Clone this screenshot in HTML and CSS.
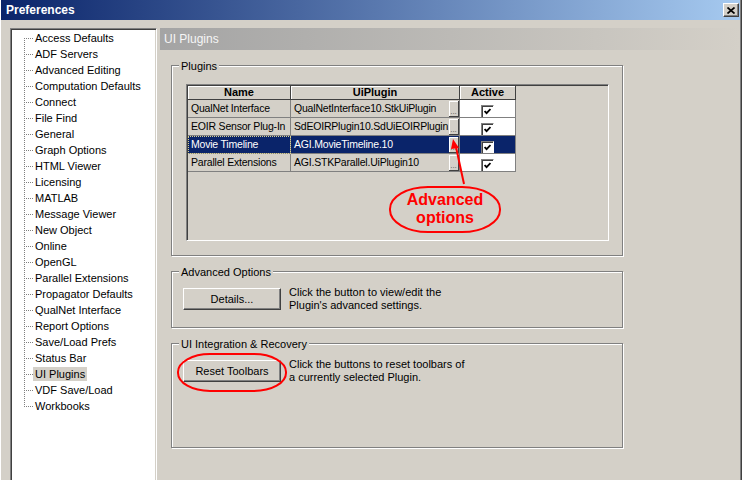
FILE: index.html
```html
<!DOCTYPE html>
<html lang="en">
  <head>
    <meta charset="utf-8">
    <title>Preferences</title>
    <link rel="stylesheet" href="styles.css">
  </head>
  <body>
    <div class="window">
      <div class="titlebar">
        <span class="title">Preferences</span>
        <span class="close"><svg width="8" height="7" viewBox="0 0 8 7"><path d="M0.5 0.5 L7.5 6.5 M7.5 0.5 L0.5 6.5" stroke="#000" stroke-width="1.7"/></svg></span>
      </div>
      <div class="content">
        <ul class="tree">
          <li><span>Access Defaults</span></li>
          <li><span>ADF Servers</span></li>
          <li><span>Advanced Editing</span></li>
          <li><span>Computation Defaults</span></li>
          <li><span>Connect</span></li>
          <li><span>File Find</span></li>
          <li><span>General</span></li>
          <li><span>Graph Options</span></li>
          <li><span>HTML Viewer</span></li>
          <li><span>Licensing</span></li>
          <li><span>MATLAB</span></li>
          <li><span>Message Viewer</span></li>
          <li><span>New Object</span></li>
          <li><span>Online</span></li>
          <li><span>OpenGL</span></li>
          <li><span>Parallel Extensions</span></li>
          <li><span>Propagator Defaults</span></li>
          <li><span>QualNet Interface</span></li>
          <li><span>Report Options</span></li>
          <li><span>Save/Load Prefs</span></li>
          <li><span>Status Bar</span></li>
          <li class="current"><span>UI Plugins</span></li>
          <li><span>VDF Save/Load</span></li>
          <li><span>Workbooks</span></li>
        </ul>
        <div class="main">
          <div class="pane-header">UI Plugins</div>

          <div class="group plugins">
            <div class="legend">Plugins</div>
            <div class="list-frame">
              <div class="grid">
                <div class="hd">Name</div>
                <div class="hd">UiPlugin</div>
                <div class="hd">Active</div>

                <div class="cell">QualNet Interface</div>
                <div class="cell plug"><span>QualNetInterface10.StkUiPlugin</span><span class="dots">...</span></div>
                <div class="cell act"><span class="chk"><svg width="7" height="7" viewBox="0 0 7 7"><path d="M0.6 3 L2.6 5.2 L6.5 1" fill="none" stroke="#000" stroke-width="1.8"/></svg></span></div>

                <div class="cell">EOIR Sensor Plug-In</div>
                <div class="cell plug"><span>SdEOIRPlugin10.SdUiEOIRPlugin</span><span class="dots">...</span></div>
                <div class="cell act"><span class="chk"><svg width="7" height="7" viewBox="0 0 7 7"><path d="M0.6 3 L2.6 5.2 L6.5 1" fill="none" stroke="#000" stroke-width="1.8"/></svg></span></div>

                <div class="cell picked focus">Movie Timeline</div>
                <div class="cell plug picked"><span>AGI.MovieTimeline.10</span><span class="dots">...</span></div>
                <div class="cell act picked"><span class="chk"><svg width="7" height="7" viewBox="0 0 7 7"><path d="M0.6 3 L2.6 5.2 L6.5 1" fill="none" stroke="#000" stroke-width="1.8"/></svg></span></div>

                <div class="cell">Parallel Extensions</div>
                <div class="cell plug"><span>AGI.STKParallel.UiPlugin10</span><span class="dots">...</span></div>
                <div class="cell act"><span class="chk"><svg width="7" height="7" viewBox="0 0 7 7"><path d="M0.6 3 L2.6 5.2 L6.5 1" fill="none" stroke="#000" stroke-width="1.8"/></svg></span></div>
              </div>
            </div>
          </div>

          <div class="group advanced">
            <div class="legend">Advanced Options</div>
            <div class="row">
              <button class="btn">Details...</button>
              <p>Click the button to view/edit the<br>Plugin's advanced settings.</p>
            </div>
          </div>

          <div class="group recovery">
            <div class="legend">UI Integration &amp; Recovery</div>
            <div class="row">
              <button class="btn">Reset Toolbars</button>
              <p>Click the buttons to reset toolbars of<br>a currently selected Plugin.</p>
            </div>
          </div>
        </div>
      </div>

      <!-- red annotations drawn over the dialog -->
      <svg class="marks" width="742" height="480" viewBox="0 0 742 480">
        <rect x="389" y="187" width="110" height="45" rx="38" ry="22" fill="none" stroke="#f00" stroke-width="2"/>
        <rect x="177" y="354" width="108" height="37" rx="32" ry="18" fill="none" stroke="#f00" stroke-width="2"/>
        <line x1="463" y1="184" x2="455" y2="147" stroke="#f00" stroke-width="2"/>
        <polygon points="452,139 458,148 450,149" fill="#f00"/>
      </svg>
      <div class="callout">Advanced<br>options</div>
    </div>
  </body>
</html>
```

FILE: styles.css
```css
body {
  margin: 0;
  background: #d4d0c8;
  font-family: "Liberation Sans", Arial, sans-serif;
  font-size: 11px;
  color: #000;
}
.window {
  position: relative;
  width: 742px;
  height: 480px;
  overflow: hidden;
  box-sizing: border-box;
  border-left: 1px solid #fff;
  border-right: 1px solid #404040;
  box-shadow: inset -1px 0 #808080;
}
.titlebar {
  height: 20px;
  margin-right: 1px;
  display: flex;
  align-items: center;
  justify-content: space-between;
  background: linear-gradient(to right, #0a246a, #a6caf0);
}
.title {
  color: #fff;
  font-weight: bold;
  font-size: 12px;
  padding-left: 5px;
}
.close {
  width: 16px;
  height: 14px;
  box-sizing: border-box;
  margin-right: 1px;
  display: flex;
  align-items: center;
  justify-content: center;
  background: #d4d0c8;
  border: 1px solid;
  border-color: #fff #404040 #404040 #fff;
  box-shadow: inset -1px -1px #808080;
}
.content {
  display: flex;
  gap: 3px;
  height: 460px;
  box-sizing: border-box;
  padding: 8px 1px 0 9px;
}

/* tree */
.tree {
  width: 147px;
  box-sizing: border-box;
  margin: 0 0 -4px 0;
  padding: 1px 0 0 13px;
  list-style: none;
  background: #fff;
  border: 1px solid;
  border-color: #808080 #fff #fff #808080;
  box-shadow: inset 1px 1px #404040, inset -1px -1px #d4d0c8;
}
.tree li {
  display: flex;
  align-items: center;
  height: 16px;
  white-space: nowrap;
}
.tree li::before {
  content: "";
  align-self: stretch;
  width: 9px;
  flex: none;
  background:
    repeating-linear-gradient(to bottom, #808080 0 1px, transparent 1px 2px) 0 0 / 1px 100% no-repeat,
    repeating-linear-gradient(to right, #808080 0 1px, transparent 1px 2px) 0 8px / 9px 1px no-repeat;
}
.tree li:first-child::before {
  background:
    repeating-linear-gradient(to bottom, #808080 0 1px, transparent 1px 2px) 0 8px / 1px 8px no-repeat,
    repeating-linear-gradient(to right, #808080 0 1px, transparent 1px 2px) 0 8px / 9px 1px no-repeat;
}
.tree li:last-child::before {
  background:
    repeating-linear-gradient(to bottom, #808080 0 1px, transparent 1px 2px) 0 0 / 1px 9px no-repeat,
    repeating-linear-gradient(to right, #808080 0 1px, transparent 1px 2px) 0 8px / 9px 1px no-repeat;
}
.tree li span {
  padding: 0 2px;
  line-height: 14px;
}
.tree li.current span {
  background: #d4d0c8;
}

/* right pane */
.main {
  flex: 1;
  display: flex;
  flex-direction: column;
}
.pane-header {
  height: 22px;
  line-height: 22px;
  padding-left: 4px;
  font-size: 12px;
  color: #f6f6f6;
  background: linear-gradient(to right, #a4a4a4, #d4d0c8);
}
.group {
  box-sizing: border-box;
  width: 452px;
  margin: 15px 0 0 11px;
  border: 1px solid #808080;
  box-shadow: 1px 1px #fff, inset 1px 1px #fff;
}
.legend {
  display: table;
  margin: -6px 0 0 7px;
  padding: 0 2px;
  line-height: 13px;
  background: #d4d0c8;
}
.plugins {
  height: 191px;
}
.advanced {
  height: 57px;
}
.recovery {
  height: 105px;
}
.list-frame {
  box-sizing: border-box;
  width: 423px;
  height: 157px;
  margin: 11px 0 0 14px;
  padding: 1px 0 0 1px;
  border: 1px solid;
  border-color: #808080 #fff #fff #808080;
  box-shadow: inset 1px 1px #404040, inset -1px -1px #d4d0c8;
}
.grid {
  display: grid;
  grid-template-columns: 103px 169px 56px;
  grid-template-rows: 14px;
  grid-auto-rows: 18px;
}
.hd {
  box-sizing: border-box;
  border-right: 1px solid #404040;
  border-bottom: 1px solid #404040;
  box-shadow: inset 1px 1px #fff;
  font-weight: bold;
  text-align: center;
  line-height: 13px;
}
.cell {
  box-sizing: border-box;
  padding-left: 3px;
  border-right: 1px solid #808080;
  border-bottom: 1px solid #808080;
  font-size: 10.5px;
  letter-spacing: -0.2px;
  line-height: 17px;
  white-space: nowrap;
  overflow: hidden;
}
.plug {
  display: flex;
  justify-content: space-between;
}
.dots {
  box-sizing: border-box;
  width: 10px;
  height: 16px;
  margin-top: 1px;
  flex: none;
  display: flex;
  align-items: flex-end;
  justify-content: center;
  font-size: 8px;
  line-height: 8px;
  letter-spacing: 0;
  color: #505050;
  background: #d4d0c8;
  border-right: 1px solid #404040;
  border-bottom: 1px solid #404040;
  box-shadow: inset 1px 1px #fff;
}
.act {
  display: flex;
  justify-content: center;
  padding: 5px 0 0 0;
  background: #fff;
}
.chk {
  box-sizing: border-box;
  width: 13px;
  height: 13px;
  padding: 2px;
  display: flex;
  background: #fff;
  border: 1px solid;
  border-color: #808080 #fff #fff #808080;
  box-shadow: inset 1px 1px #404040;
}
.picked {
  background: #0a246a;
  color: #fff;
}
.focus {
  outline: 1px dotted #d8d090;
  outline-offset: -1px;
}
.row {
  display: flex;
  align-items: flex-start;
  margin: 9px 0 0 11px;
}
.btn {
  width: 98px;
  height: 22px;
  margin: 0;
  padding: 0;
  font: inherit;
  color: #000;
  background: #d4d0c8;
  border: 1px solid;
  border-color: #fff #404040 #404040 #fff;
  box-shadow: inset -1px -1px #808080;
}
.row p {
  margin: -2px 0 0 8px;
  line-height: 13px;
}

/* annotations */
.marks {
  position: absolute;
  left: 0;
  top: 0;
}
.callout {
  position: absolute;
  left: 389px;
  top: 191px;
  width: 110px;
  text-align: center;
  color: #f00;
  font-weight: bold;
  font-size: 16px;
  line-height: 18px;
}
```
